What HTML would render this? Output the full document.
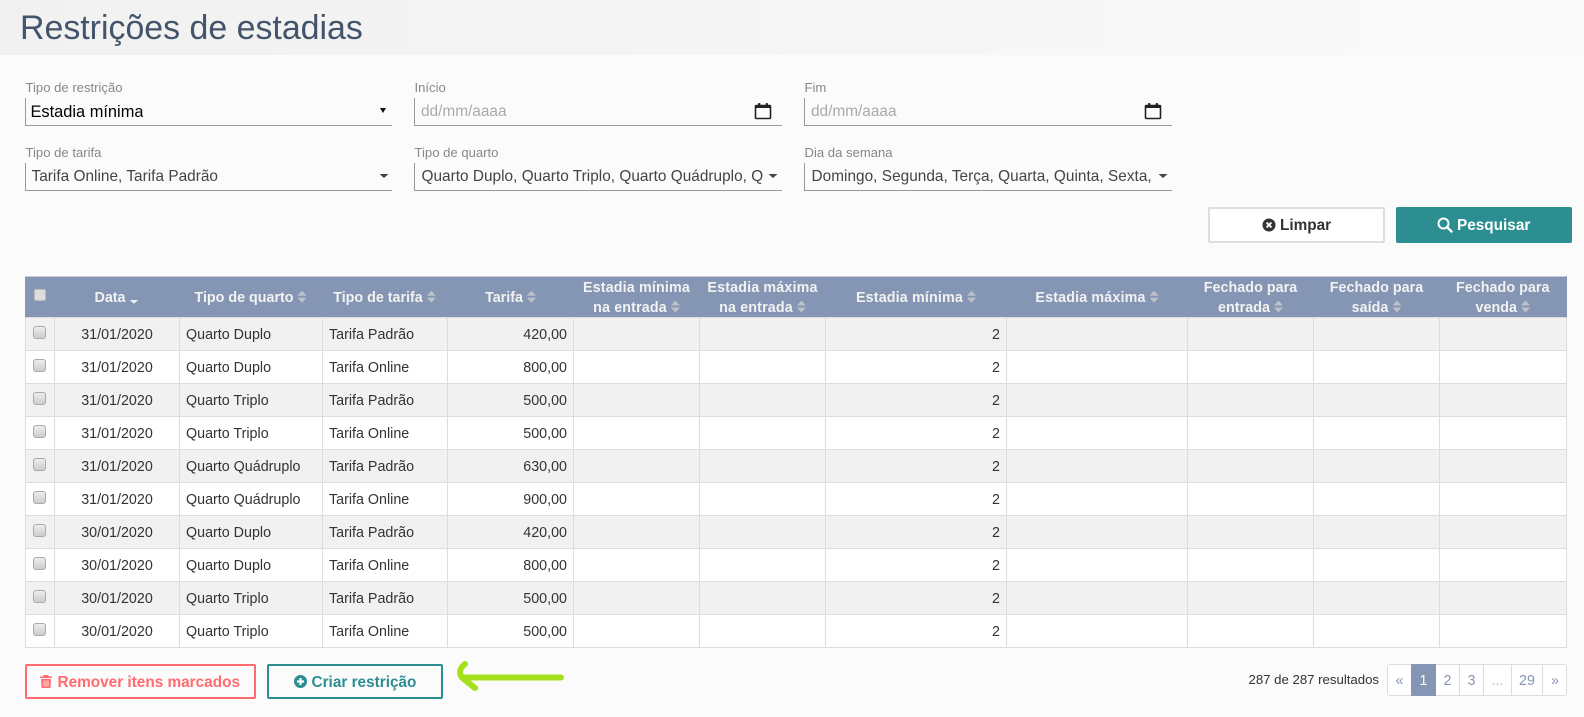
<!DOCTYPE html>
<html lang="pt"><head><meta charset="utf-8"><title>Restrições de estadias</title>
<style>
*{box-sizing:border-box}
html,body{margin:0;padding:0}
body{width:1584px;height:717px;position:relative;overflow:hidden;background:#fbfbfb;font-family:"Liberation Sans",Arial,sans-serif;color:#333}
.band{position:absolute;left:0;top:0;width:1584px;height:55px;background:linear-gradient(90deg,#f1f1f1,#fafafa)}
h1{position:absolute;left:20px;top:8px;margin:0;font-weight:400;font-size:33.9px;line-height:40px;color:#44546a;white-space:nowrap}
.lb{position:absolute;font-size:13.1px;line-height:16px;color:#888;white-space:nowrap}
.f{position:absolute;height:28px;border-left:1px solid #999;border-bottom:1.5px solid #999}
.v{position:absolute;left:5.5px;top:1px;line-height:26px;font-size:15.35px;color:#444;white-space:nowrap;overflow:hidden}
.ph{color:#aaa;font-size:15.4px;left:6px}
.tri{position:absolute;width:9px;height:4px;background:#444;clip-path:polygon(0 0,100% 0,50% 100%)}
.cal{position:absolute;top:4px}
.btn{position:absolute;font-weight:700;font-size:15.35px;white-space:nowrap;border-radius:2px}
.btn span{position:absolute;top:1px;line-height:32px}
.btn svg{position:absolute}
table{position:absolute;left:25px;top:276px;width:1541px;table-layout:fixed;border-collapse:collapse;font-size:14.3px}
th{height:40px;background:#8496b3;color:#f2f2f2;font-weight:700;font-size:14.3px;line-height:19.5px;text-align:center;padding:1px 0 0;border:0}
th div{position:relative;top:1px}
thead tr{border:1px solid #8496b3;border-top:1px solid #ccd;}
td{height:33px;border:1px solid #ddd;padding:1.5px 6px 0;white-space:nowrap;line-height:30px;color:#333}
tbody tr:nth-child(odd) td{background:#f1f1f1}
tbody tr:nth-child(even) td{background:#fff}
td.c{text-align:center}
td.r{text-align:right}
td.k{padding:0;position:relative}
.ck{position:absolute;left:7px;top:8px;width:13px;height:13px;border:1px solid #aaa;border-radius:3px;background:linear-gradient(#eee,#ccc)}
.ckh{display:block;width:12px;height:12px;margin:-5px 0 0 8px;background:#ddd;border:1px solid #bbb;border-radius:2px}
.s{display:inline-block;width:9px;height:12px;margin-left:4px;vertical-align:-1px;background:#bcc1ca;clip-path:polygon(50% 0,100% 42%,0 42%,50% 0,50% 100%,0 58%,100% 58%,50% 100%)}
.d{display:inline-block;width:9px;height:4px;margin-left:4px;vertical-align:-2px;background:#f2f2f2;clip-path:polygon(0 0,100% 0,50% 100%)}
.res{position:absolute;left:1248.5px;top:672px;font-size:13.2px;line-height:16px;color:#333;white-space:nowrap}
.pg{position:absolute;left:1387px;top:664px;width:180px;height:32px;border:1px solid #ddd;border-radius:3px;background:#fff}
.pg i{position:absolute;top:0;height:31px;font-style:normal;text-align:center;line-height:32px;font-size:14.3px;color:#8496b3;border-right:1px solid #ddd}
.pg i.a{top:-1px;height:32px;line-height:34px;background:#8496b3;color:#fff;border-right:0}
</style></head><body>
<div class="band"></div>
<h1>Restrições de estadias</h1>

<div class="lb" style="left:25.5px;top:80px">Tipo de restrição</div>
<div class="f" style="left:25px;top:98px;width:367px"><div class="v" style="left:4.5px;font-size:16.4px;color:#000">Estadia mínima</div><div class="tri" style="left:354px;top:10px;width:6px;height:5px;background:#111"></div></div>
<div class="lb" style="left:414.5px;top:80px">Início</div>
<div class="f" style="left:414px;top:98px;width:368px"><div class="v ph">dd/mm/aaaa</div>
<svg class="cal" style="left:339px" width="18" height="18" viewBox="0 0 18 18"><rect x="1.500" y="3.500" width="15" height="13" rx="1" fill="none" stroke="#222" stroke-width="1.600"/><rect x="1" y="3" width="16" height="3" fill="#222"/><rect x="4" y="1" width="2.400" height="4" rx="1" fill="#222"/><rect x="11.600" y="1" width="2.400" height="4" rx="1" fill="#222"/></svg></div>
<div class="lb" style="left:804.5px;top:80px">Fim</div>
<div class="f" style="left:804px;top:98px;width:368px"><div class="v ph">dd/mm/aaaa</div>
<svg class="cal" style="left:339px" width="18" height="18" viewBox="0 0 18 18"><rect x="1.500" y="3.500" width="15" height="13" rx="1" fill="none" stroke="#222" stroke-width="1.600"/><rect x="1" y="3" width="16" height="3" fill="#222"/><rect x="4" y="1" width="2.400" height="4" rx="1" fill="#222"/><rect x="11.600" y="1" width="2.400" height="4" rx="1" fill="#222"/></svg></div>

<div class="lb" style="left:25.5px;top:145px">Tipo de tarifa</div>
<div class="f" style="left:25px;top:163px;width:367px"><div class="v" style="letter-spacing:.03px">Tarifa Online, Tarifa Padrão</div><div class="tri" style="left:353.5px;top:11px"></div></div>
<div class="lb" style="left:414.5px;top:145px">Tipo de quarto</div>
<div class="f" style="left:414px;top:163px;width:368px"><div class="v" style="left:6.5px;width:343px;letter-spacing:.03px">Quarto Duplo, Quarto Triplo, Quarto Quádruplo, Q</div><div class="tri" style="left:353.5px;top:11px"></div></div>
<div class="lb" style="left:804.5px;top:145px">Dia da semana</div>
<div class="f" style="left:804px;top:163px;width:368px"><div class="v" style="left:6.5px;width:343px;letter-spacing:.04px">Domingo, Segunda, Terça, Quarta, Quinta, Sexta,</div><div class="tri" style="left:353.5px;top:11px"></div></div>

<div class="btn" style="left:1208px;top:207px;width:177px;height:36px;background:#fff;border:2px solid #ddd;color:#333"><svg style="left:52px;top:9px" width="14" height="14" viewBox="0 0 14 14"><circle cx="7" cy="7" r="6.500" fill="#333"/><path d="M4.600 4.600l4.800 4.800M9.400 4.600l-4.800 4.800" stroke="#fff" stroke-width="2"/></svg><span style="left:70px">Limpar</span></div>
<div class="btn" style="left:1396px;top:207px;width:176px;height:36px;background:#2d8e92;color:#fff"><svg style="left:41px;top:10px" width="16" height="16" viewBox="0 0 16 16"><circle cx="6.500" cy="6.500" r="5" fill="none" stroke="#fff" stroke-width="2"/><path d="M10 10l4.500 4.500" stroke="#fff" stroke-width="2.400" stroke-linecap="round"/></svg><span style="left:61px;top:3px">Pesquisar</span></div>

<table>
<colgroup><col style="width:29px"><col style="width:125px"><col style="width:143px"><col style="width:125px"><col style="width:126px"><col style="width:126px"><col style="width:126px"><col style="width:181px"><col style="width:181px"><col style="width:126px"><col style="width:126px"><col style="width:127px"></colgroup>
<thead><tr>
<th><span class="ckh"></span></th>
<th style="padding-right:1px"><div>Data<span class="d"></span></div></th>
<th style="padding-right:1px"><div>Tipo de quarto<span class="s"></span></div></th>
<th style="padding-right:1px"><div>Tipo de tarifa<span class="s"></span></div></th>
<th><div>Tarifa<span class="s"></span></div></th>
<th style="letter-spacing:.15px"><div>Estadia mínima<br>na entrada<span class="s"></span></div></th>
<th style="letter-spacing:.15px"><div>Estadia máxima<br>na entrada<span class="s"></span></div></th>
<th style="letter-spacing:.15px"><div>Estadia mínima<span class="s"></span></div></th>
<th style="letter-spacing:.15px"><div>Estadia máxima<span class="s"></span></div></th>
<th style="letter-spacing:.05px"><div>Fechado para<br>entrada<span class="s"></span></div></th>
<th style="letter-spacing:.05px"><div>Fechado para<br>saída<span class="s"></span></div></th>
<th style="letter-spacing:.05px"><div>Fechado para<br>venda<span class="s"></span></div></th>
</tr></thead>
<tbody>
<tr><td class="k"><span class="ck"></span></td><td class="c">31/01/2020</td><td>Quarto Duplo</td><td>Tarifa Padrão</td><td class="r">420,00</td><td></td><td></td><td class="r">2</td><td></td><td></td><td></td><td></td></tr>
<tr><td class="k"><span class="ck"></span></td><td class="c">31/01/2020</td><td>Quarto Duplo</td><td>Tarifa Online</td><td class="r">800,00</td><td></td><td></td><td class="r">2</td><td></td><td></td><td></td><td></td></tr>
<tr><td class="k"><span class="ck"></span></td><td class="c">31/01/2020</td><td>Quarto Triplo</td><td>Tarifa Padrão</td><td class="r">500,00</td><td></td><td></td><td class="r">2</td><td></td><td></td><td></td><td></td></tr>
<tr><td class="k"><span class="ck"></span></td><td class="c">31/01/2020</td><td>Quarto Triplo</td><td>Tarifa Online</td><td class="r">500,00</td><td></td><td></td><td class="r">2</td><td></td><td></td><td></td><td></td></tr>
<tr><td class="k"><span class="ck"></span></td><td class="c">31/01/2020</td><td>Quarto Quádruplo</td><td>Tarifa Padrão</td><td class="r">630,00</td><td></td><td></td><td class="r">2</td><td></td><td></td><td></td><td></td></tr>
<tr><td class="k"><span class="ck"></span></td><td class="c">31/01/2020</td><td>Quarto Quádruplo</td><td>Tarifa Online</td><td class="r">900,00</td><td></td><td></td><td class="r">2</td><td></td><td></td><td></td><td></td></tr>
<tr><td class="k"><span class="ck"></span></td><td class="c">30/01/2020</td><td>Quarto Duplo</td><td>Tarifa Padrão</td><td class="r">420,00</td><td></td><td></td><td class="r">2</td><td></td><td></td><td></td><td></td></tr>
<tr><td class="k"><span class="ck"></span></td><td class="c">30/01/2020</td><td>Quarto Duplo</td><td>Tarifa Online</td><td class="r">800,00</td><td></td><td></td><td class="r">2</td><td></td><td></td><td></td><td></td></tr>
<tr><td class="k"><span class="ck"></span></td><td class="c">30/01/2020</td><td>Quarto Triplo</td><td>Tarifa Padrão</td><td class="r">500,00</td><td></td><td></td><td class="r">2</td><td></td><td></td><td></td><td></td></tr>
<tr><td class="k"><span class="ck"></span></td><td class="c">30/01/2020</td><td>Quarto Triplo</td><td>Tarifa Online</td><td class="r">500,00</td><td></td><td></td><td class="r">2</td><td></td><td></td><td></td><td></td></tr>
</tbody></table>

<div class="btn" style="left:25px;top:664px;width:231px;height:35px;border:2px solid #ff6b6f;color:#ff6b6f"><svg style="left:13px;top:9px" width="12" height="13" viewBox="0 0 12 13"><path d="M4 0h4l1 1.500h3V3H0V1.500h3zM1 4h10l-.6 9H1.600z" fill="#ff6b6f"/><path d="M4 5.500v6M6 5.500v6M8 5.500v6" stroke="#fff" stroke-width=".8"/></svg><span style="left:30.5px;top:.5px">Remover itens marcados</span></div>
<div class="btn" style="left:267px;top:664px;width:176px;height:35px;border:2px solid #2d8e92;color:#2d8e92"><svg style="left:24.500px;top:9px" width="13" height="13" viewBox="0 0 13 13"><circle cx="6.500" cy="6.500" r="6.500" fill="#2d8e92"/><path d="M6.500 3v7M3 6.500h7" stroke="#fff" stroke-width="2.200"/></svg><span style="left:42.5px;top:.5px">Criar restrição</span></div>

<svg style="position:absolute;left:450px;top:655px" width="125" height="45" viewBox="450 655 125 45"><path d="M465 664C459.500 668 458.500 674 462.500 678L475 688M465 677.500H561" fill="none" stroke="#a4e11c" stroke-width="6" stroke-linecap="round" stroke-linejoin="round"/></svg>

<div class="res">287 de 287 resultados</div>
<div class="pg">
<i style="left:0;width:24px">«</i>
<i class="a" style="left:23px;width:25px">1</i>
<i style="left:48px;width:24px">2</i>
<i style="left:72px;width:24px">3</i>
<i style="left:96px;width:28px;color:#bbb">...</i>
<i style="left:124px;width:31px">29</i>
<i style="left:155px;width:24px;border:0">»</i>
</div>
</body></html>
